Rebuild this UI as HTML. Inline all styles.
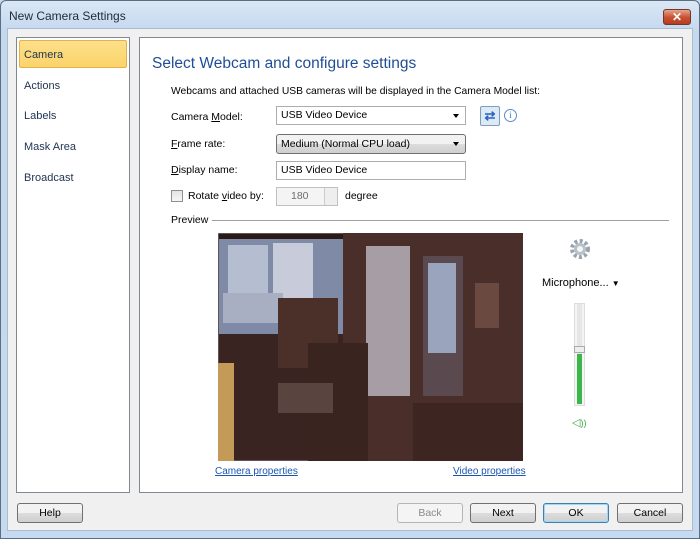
<!DOCTYPE html>
<html><head><style>
*{box-sizing:border-box;margin:0;padding:0}
body{width:700px;height:539px;overflow:hidden;background:#c9dcf0;font-family:"Liberation Sans",sans-serif;font-size:10.5px;color:#000;position:relative}
.abs{position:absolute}
.frame{left:0;top:0;width:700px;height:539px;border:1px solid #5a6f86;border-radius:6px 6px 0 0;background:linear-gradient(#dae7f5,#c4d8ee 30px,#c6daef)}
.client{left:7px;top:28px;width:686px;height:503px;background:#f0f0f0;border:1px solid #a9bcd0}
.panel{background:#fff;border:1px solid #828790}
.nav{left:24px;font-size:11px;color:#1e3250}
.btn{height:20px;border:1px solid #707070;border-radius:3px;background:linear-gradient(#f2f2f2 50%,#dddddd 50%,#cfcfcf);text-align:center;line-height:18px;font-size:10.5px}
.inp{height:19px;border:1px solid #abadb3;background:#fff;padding-left:4px;line-height:17px}
.lbl{left:171px}
.arr{position:absolute;right:6px;top:7px;border-left:3.5px solid transparent;border-right:3.5px solid transparent;border-top:4px solid #000}
a{color:#1a56b0;text-decoration:underline}
</style></head><body>
<div class="abs frame"></div>
<div class="abs" style="left:9px;top:9px;font-size:12px;color:#1d2a3a">New Camera Settings</div>
<div class="abs" style="left:663px;top:9px;width:28px;height:16px;border:1px solid #6d3830;border-radius:3px;background:linear-gradient(#e8a48c,#c95434 50%,#b83a1c);color:#fff;font-weight:bold;text-align:center;line-height:14px;font-size:12px">✕</div>
<div class="abs client"></div>
<div class="abs panel" style="left:16px;top:37px;width:114px;height:456px"></div>
<div class="abs" style="left:19px;top:40px;width:108px;height:28px;border:1px solid #e2b34a;border-radius:2px;background:linear-gradient(#fde08a,#fbd36a)"></div>
<div class="abs nav" style="top:49px">Camera</div>
<div class="abs nav" style="top:80px">Actions</div>
<div class="abs nav" style="top:110px">Labels</div>
<div class="abs nav" style="top:141px">Mask Area</div>
<div class="abs nav" style="top:172px">Broadcast</div>
<div class="abs panel" style="left:139px;top:37px;width:544px;height:456px"></div>
<div class="abs" style="left:152px;top:55px;font-size:15.5px;color:#1f4e96">Select Webcam and configure settings</div>
<div class="abs" style="left:171px;top:86px;font-size:10.3px">Webcams and attached USB cameras will be displayed in the Camera Model list:</div>
<div class="abs lbl" style="top:111px">Camera <u>M</u>odel:</div>
<div class="abs inp" style="left:276px;top:106px;width:190px">USB Video Device<span class="arr"></span></div>
<div class="abs" style="left:480px;top:106px;width:20px;height:20px;border:1px solid #7f9db9;border-radius:2px;background:#dce9f7;color:#2a63c2;font-weight:bold;text-align:center;line-height:18px;font-size:13px">⇄</div>
<div class="abs" style="left:504px;top:109px;width:13px;height:13px;border:1px solid #5c8ad0;border-radius:50%;color:#3a72c8;font-size:9px;text-align:center;line-height:11px;font-family:'Liberation Serif',serif">i</div>
<div class="abs lbl" style="top:138px"><u>F</u>rame rate:</div>
<div class="abs btn" style="left:276px;top:134px;width:190px;text-align:left;padding-left:4px;border-color:#707070">Medium (Normal CPU load)<span class="arr"></span></div>
<div class="abs lbl" style="top:164px"><u>D</u>isplay name:</div>
<div class="abs inp" style="left:276px;top:161px;width:190px">USB Video Device</div>
<div class="abs" style="left:171px;top:190px;width:12px;height:12px;border:1px solid #8e8f8f;background:linear-gradient(#e4e4e4,#f6f6f6)"></div>
<div class="abs" style="left:188px;top:190px">Rotate <u>v</u>ideo by:</div>
<div class="abs" style="left:276px;top:187px;width:62px;height:19px;border:1px solid #c0c0c0;background:#f4f4f4;color:#6d6d6d;padding-left:14px;line-height:17px">180</div>
<div class="abs" style="left:324px;top:188px;width:13px;height:17px;border-left:1px solid #ccc;background:#eee"></div>
<div class="abs" style="left:345px;top:190px">degree</div>
<div class="abs" style="left:171px;top:214px">Preview</div>
<div class="abs" style="left:212px;top:220px;width:457px;height:1px;background:#a0a0a0"></div>
<svg class="abs" style="left:218px;top:233px" width="305" height="228">
<rect x="0" y="0" width="305" height="228" fill="#3a2421" stroke="#888"/>
<rect x="1" y="1" width="303" height="6" fill="#2a1a18"/>
<rect x="1" y="6" width="125" height="95" fill="#7f8aa6"/>
<rect x="10" y="12" width="40" height="50" fill="#b5bdd0"/>
<rect x="55" y="10" width="40" height="55" fill="#c8ccda"/>
<rect x="5" y="60" width="60" height="30" fill="#a8afc2"/>
<rect x="60" y="65" width="60" height="70" fill="#4a3028"/>
<rect x="125" y="0" width="180" height="228" fill="#4a2e2a"/>
<rect x="148" y="13" width="44" height="150" fill="#a69ea4"/>
<rect x="205" y="23" width="40" height="140" fill="#5a4a50"/>
<rect x="210" y="30" width="28" height="90" fill="#9aa4bc"/>
<rect x="257" y="50" width="24" height="45" fill="#6a4a40"/>
<rect x="0" y="130" width="16" height="98" fill="#c49a58"/>
<rect x="90" y="110" width="60" height="118" fill="#3a2420"/>
<rect x="60" y="150" width="55" height="30" fill="#5a4440"/>
<rect x="195" y="170" width="110" height="58" fill="#3d2622"/>
</svg>
<div class="abs" style="left:215px;top:466px;font-size:10px"><a>Camera properties</a></div>
<div class="abs" style="left:453px;top:466px;font-size:10px"><a>Video properties</a></div>
<svg class="abs" style="left:569px;top:238px" width="22" height="22" viewBox="0 0 22 22"><circle cx="11" cy="11" r="8" fill="none" stroke="#9aa3ad" stroke-width="4" stroke-dasharray="3 2.3"/><circle cx="11" cy="11" r="6" fill="#b8c0c8"/><circle cx="11" cy="11" r="3" fill="#f4f6f8"/></svg>
<div class="abs" style="left:542px;top:277px;font-size:11px">Microphone... <span style="font-size:8px">▼</span></div>
<div class="abs" style="left:574px;top:303px;width:11px;height:103px;border:1px solid #ddd;background:#f4f4f4"></div>
<div class="abs" style="left:577px;top:304px;width:5px;height:100px;background:#e6e6e6"></div>
<div class="abs" style="left:577px;top:354px;width:5px;height:50px;background:#3cb54a"></div>
<div class="abs" style="left:574px;top:346px;width:11px;height:7px;border:1px solid #aaa;background:#eee"></div>
<div class="abs" style="left:572px;top:416px;font-size:11px;color:#3caa44">◁<span style="font-size:9px">))</span></div>
<div class="abs btn" style="left:17px;top:503px;width:66px">Help</div>
<div class="abs btn" style="left:397px;top:503px;width:66px;color:#8a8a8a;border-color:#b5b5b5;background:#f4f4f4">Back</div>
<div class="abs btn" style="left:470px;top:503px;width:66px">Next</div>
<div class="abs btn" style="left:543px;top:503px;width:66px;border-color:#3c7fb1;box-shadow:inset 0 0 0 1px #9fd8f5">OK</div>
<div class="abs btn" style="left:617px;top:503px;width:66px">Cancel</div>
</body></html>
